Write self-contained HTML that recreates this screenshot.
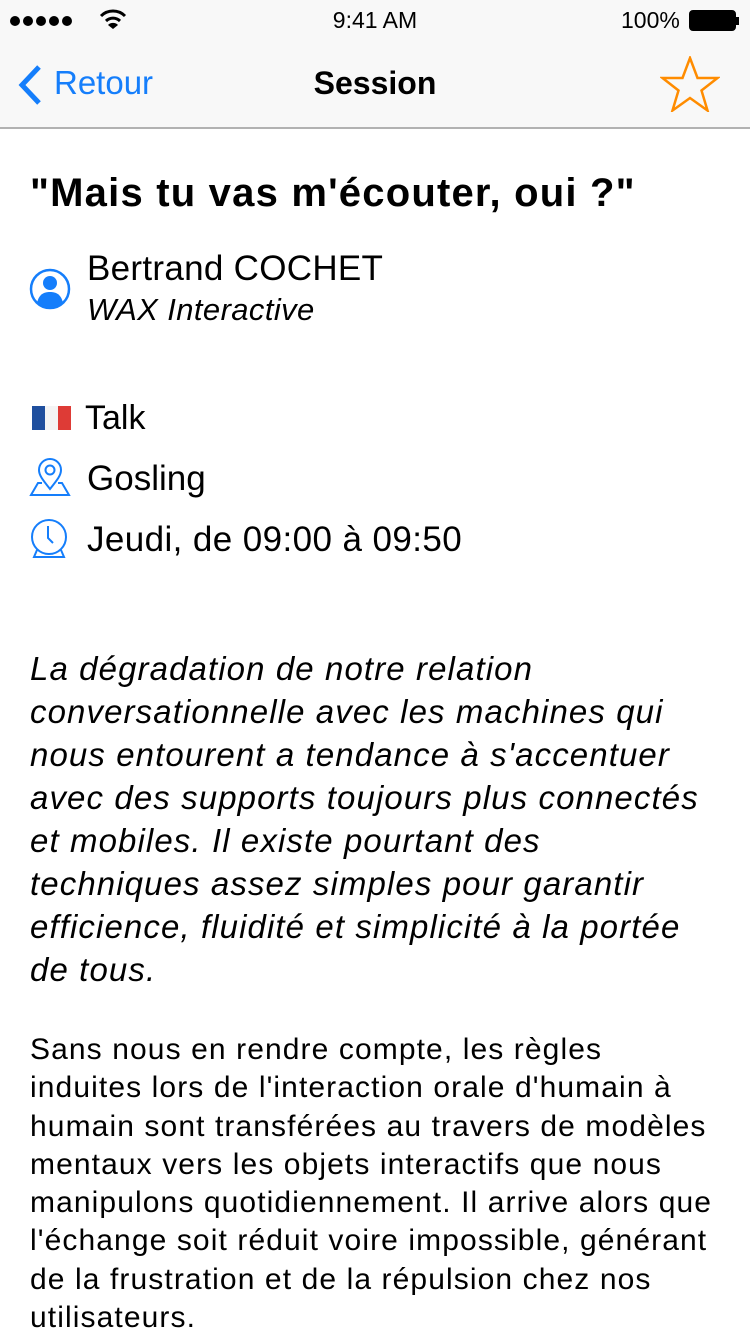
<!DOCTYPE html>
<html><head><meta charset="utf-8"><style>
*{margin:0;padding:0;box-sizing:border-box}
body{width:750px;height:1334px;overflow:hidden;background:#fff;font-family:"Liberation Sans",sans-serif;color:#000;position:relative}
.nav{position:absolute;left:0;top:0;width:750px;height:129px;background:#f8f8f8;border-bottom:2px solid #b2b2b2}
.abs{position:absolute;white-space:nowrap}
.it{font-style:italic}
p.i{position:absolute;left:30px;top:647px;font-size:33px;line-height:43px;font-style:italic;letter-spacing:1.1px;white-space:nowrap}
p.n{position:absolute;left:30px;top:1031px;font-size:30px;line-height:38.3px;letter-spacing:1.1px;white-space:nowrap}
</style></head><body>
<div class="nav"></div>
<svg class="abs" style="left:8px;top:12px" width="80" height="18"><g fill="#000"><circle cx="7" cy="9" r="5"/><circle cx="20" cy="9" r="5"/><circle cx="33" cy="9" r="5"/><circle cx="46" cy="9" r="5"/><circle cx="59" cy="9" r="5"/></g></svg>
<svg class="abs" style="left:98px;top:8px" width="30" height="22" viewBox="0 0 30 22"><g fill="none" stroke="#000" stroke-width="3"><path d="M3 8a17 17 0 0 1 24 0"/><path d="M8 13a10 10 0 0 1 14 0"/></g><path d="M15 21l-5-4a7 7 0 0 1 10 0z" fill="#000"/></svg>
<div class="abs" style="left:0;width:750px;text-align:center;top:7px;font-size:23px">9:41 AM</div>
<div class="abs" style="left:621px;top:7px;font-size:23px">100%</div>
<svg class="abs" style="left:689px;top:10px" width="52" height="22"><rect x="1" y="1" width="45" height="19" rx="3" fill="#000" stroke="#000" stroke-width="2"/><rect x="47" y="7" width="3" height="8" fill="#000"/></svg>
<svg class="abs" style="left:14px;top:64px" width="30" height="42"><path d="M25 3L8 21l17 18" fill="none" stroke="#157efb" stroke-width="5"/></svg>
<div class="abs" style="left:54px;top:64px;font-size:33px;color:#157efb">Retour</div>
<div class="abs" style="left:0;width:750px;text-align:center;top:65px;font-size:32px;font-weight:bold">Session</div>
<svg class="abs" style="left:660px;top:56px" width="60" height="56" viewBox="0 0 60 56"><path d="M30 2l7.5 20h20l-16 12.5 6 20L30 42 12.5 54.5l6-20L2.5 22h20z" fill="none" stroke="#ff8c00" stroke-width="2.5"/></svg>
<div class="abs" style="left:30px;top:171px;font-size:40px;font-weight:bold;letter-spacing:1.2px">"Mais tu vas m'écouter, oui ?"</div>
<svg class="abs" style="left:29px;top:268px" width="42" height="42" viewBox="0 0 42 42"><circle cx="21" cy="21" r="19" fill="none" stroke="#157efb" stroke-width="2.5"/><circle cx="21" cy="15" r="7" fill="#157efb"/><path d="M8 35c2-9 7-11 13-11s11 2 13 11a19 19 0 0 1-26 0z" fill="#157efb"/></svg>
<div class="abs" style="left:87px;top:249px;font-size:35px;letter-spacing:0.3px">Bertrand COCHET</div>
<div class="abs it" style="left:87px;top:292px;font-size:31px;letter-spacing:0.4px">WAX Interactive</div>
<svg class="abs" style="left:32px;top:404px" width="40" height="28"><rect x="0" y="2" width="13" height="24" fill="#1f4f9e"/><rect x="13" y="2" width="13" height="24" fill="#f4f4f4"/><rect x="26" y="2" width="13" height="24" fill="#de3b36"/></svg>
<div class="abs" style="left:85px;top:399px;font-size:34px">Talk</div>
<svg class="abs" style="left:29px;top:458px" width="44" height="40" viewBox="0 0 44 40"><g fill="none" stroke="#157efb" stroke-width="2"><path d="M21 31C13 21 10 17 10 12a11 11 0 0 1 22 0c0 5-3 9-11 19z"/><circle cx="21" cy="12" r="4.5"/><path d="M13 25H9L2 37h38l-7-12h-4"/></g></svg>
<div class="abs" style="left:87px;top:459px;font-size:35px">Gosling</div>
<svg class="abs" style="left:29px;top:518px" width="42" height="42" viewBox="0 0 42 42"><g fill="none" stroke="#157efb" stroke-width="2"><circle cx="20" cy="19" r="17"/><path d="M19 8v12l5 5"/><path d="M8 32l-3 7h30l-3-7"/></g></svg>
<div class="abs" style="left:87px;top:520px;font-size:35px;letter-spacing:0.4px">Jeudi, de 09:00 à 09:50</div>
<p class="i">La dégradation de notre relation<br>conversationnelle avec les machines qui<br>nous entourent a tendance à s'accentuer<br>avec des supports toujours plus connectés<br>et mobiles. Il existe pourtant des<br>techniques assez simples pour garantir<br>efficience, fluidité et simplicité à la portée<br>de tous.</p>
<p class="n">Sans nous en rendre compte, les règles<br>induites lors de l'interaction orale d'humain à<br>humain sont transférées au travers de modèles<br>mentaux vers les objets interactifs que nous<br>manipulons quotidiennement. Il arrive alors que<br>l'échange soit réduit voire impossible, générant<br>de la frustration et de la répulsion chez nos<br>utilisateurs.</p>
</body></html>
